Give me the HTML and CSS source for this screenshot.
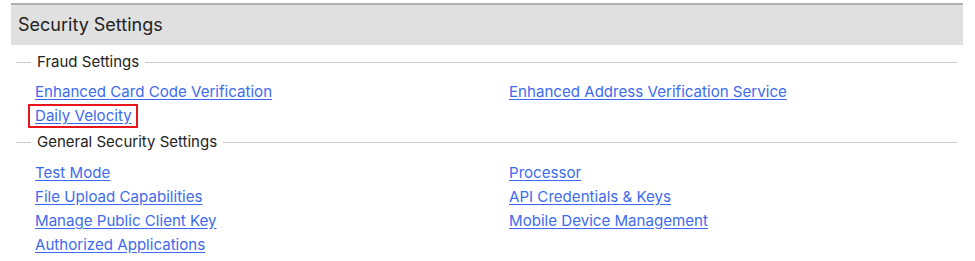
FILE: index.html
```html
<!DOCTYPE html>
<html>
<head>
<meta charset="utf-8">
<link rel="stylesheet" href="styles.css">
</head>
<body>
<div class="page">
  <div class="header">Security Settings</div>
  <fieldset class="group">
    <legend>Fraud Settings</legend>
    <div class="links">
      <div class="col">
        <a href="#">Enhanced Card Code Verification</a>
        <a href="#" class="selected">Daily Velocity</a>
      </div>
      <div class="col">
        <a href="#">Enhanced Address Verification Service</a>
      </div>
    </div>
  </fieldset>
  <fieldset class="group general">
    <legend>General Security Settings</legend>
    <div class="links">
      <div class="col">
        <a href="#">Test Mode</a>
        <a href="#">File Upload Capabilities</a>
        <a href="#">Manage Public Client Key</a>
        <a href="#">Authorized Applications</a>
      </div>
      <div class="col">
        <a href="#">Processor</a>
        <a href="#">API Credentials &amp; Keys</a>
        <a href="#">Mobile Device Management</a>
      </div>
    </div>
  </fieldset>
</div>
</body>
</html>
```
FILE: styles.css
```css
html, body {
  margin: 0;
  padding: 0;
  background: #ffffff;
}
body {
  font-family: Inter, "Noto Sans", sans-serif;
  color: #222222;
}
.page {
  padding: 3px 12px 0 11px;
}
.header {
  background: #e0e0e0;
  border-top: 2px solid #b0b0b0;
  height: 40px;
  line-height: 40px;
  padding-left: 7px;
  font-size: 18px;
  color: #222;
}
.group {
  border: none;
  border-top: 1px solid #cccccc;
  margin: 7px 6px 0 5px;
  padding: 0 0 0 19px;
  min-width: 0;
}
.group.general {
  margin-top: 4px;
}
.group legend {
  padding: 0 6px;
  margin-left: -4px;
  font-size: 15px;
  line-height: 20px;
  color: #222;
}
.links {
  display: grid;
  grid-template-columns: 474px 1fr;
  padding-top: 8px;
}
.general .links {
  padding-top: 9px;
}
.col {
  display: flex;
  flex-direction: column;
  align-items: flex-start;
}
.col a {
  font-size: 15.1px;
  line-height: 24px;
  color: #3d6bf0;
  text-decoration: underline;
  text-underline-offset: 2px;
}
.col a.selected {
  padding: 0 6px 0 7px;
  margin-left: -7px;
  outline: 2px solid #e8161b;
  outline-offset: -2px;
}
```
